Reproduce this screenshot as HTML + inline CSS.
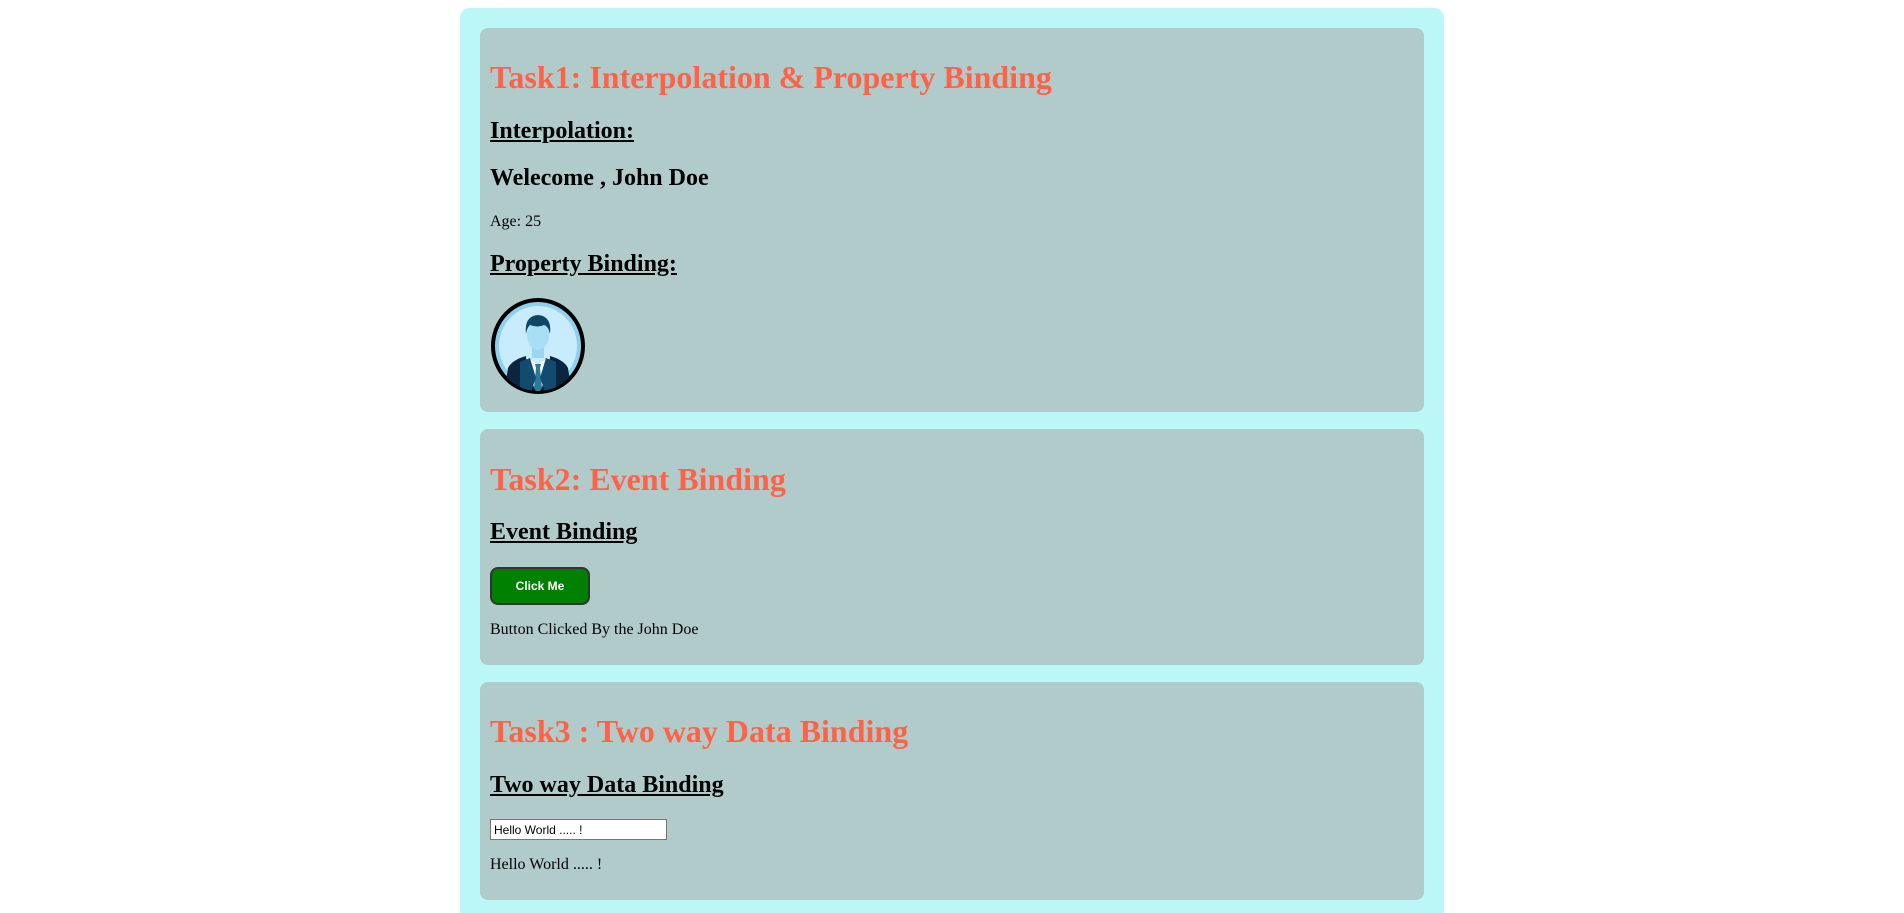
<!DOCTYPE html>
<html><head><meta charset="utf-8"><style>
html,body{margin:0;padding:0;background:#fff;overflow:hidden;}
body{width:1904px;height:913px;position:relative;font-family:"Liberation Serif",serif;}
.outer{position:absolute;left:460px;top:8px;width:944px;height:865px;background:#bbf7f7;border-radius:10px 10px 0 0;padding:20px;}
.card{background:#b1cbcb;border-radius:8px;padding:10px;margin-bottom:17px;}
.card h1{color:#ff6347;font-size:32px;margin:21.44px 0;line-height:37px;}
.card h2{font-size:24px;margin:19.92px 0;line-height:27.6px;}
.u{text-decoration:underline;}
.card p{font-size:16px;margin:16px 0;line-height:18px;}
.card p.age{margin:19.92px 0;}
.btn{display:block;width:100px;height:38px;background:#008000;border:2px solid #333;border-radius:8px;color:#fff;font:bold 12px "Liberation Sans",sans-serif;box-sizing:border-box;}
input{display:block;width:177px;height:21px;box-sizing:border-box;border:1px solid #767676;font:12px "Liberation Sans",sans-serif;padding:1px 3px;margin:0;background:#fff;}
</style></head><body>
<div class="outer">
<div class="card">
<h1>Task1: Interpolation &amp; Property Binding</h1>
<h2 class="u">Interpolation:</h2>
<h2>Welecome , John Doe</h2>
<p class="age">Age: 25</p>
<h2 class="u">Property Binding:</h2>
<svg width="96" height="96" viewBox="0 0 96 96" style="display:block;margin-top:19.92px;margin-bottom:8px">
<defs><clipPath id="c"><ellipse cx="48" cy="48" rx="44" ry="45"/></clipPath></defs>
<ellipse cx="48" cy="48" rx="45" ry="46" fill="#90d0ee" stroke="#000" stroke-width="4"/>
<ellipse cx="48" cy="48" rx="39" ry="40" fill="#c8ecfc"/>
<g clip-path="url(#c)">
<path d="M14 96 L18 70 Q22 62 36 58 L48 66 L60 58 Q74 62 78 70 L82 96Z" fill="#0b2440"/>
<path d="M36 58 L48 66 L60 58 L58 78 L48 96 L38 78Z" fill="#fff"/>
<path d="M45 66 L51 66 L50 70 L52 90 L48 96 L44 90 L46 70Z" fill="#2a7a9a"/>
<path d="M30 64 L40 60 L46 80 L40 96 L30 96Z" fill="#134a70"/>
<path d="M66 64 L56 60 L50 80 L56 96 L66 96Z" fill="#134a70"/>
</g>
<rect x="42" y="48" width="12" height="12" fill="#9bd6f0"/>
<ellipse cx="48" cy="38" rx="11" ry="14" fill="#a8def6"/>
<path d="M36 36 Q34 18 48 17 Q62 18 60 36 Q58 28 54 27 Q48 30 40 27 Q37 30 36 36Z" fill="#0f4668"/>
</svg>
</div>
<div class="card">
<h1>Task2: Event Binding</h1>
<h2 class="u">Event Binding</h2>
<button class="btn">Click Me</button>
<p>Button Clicked By the John Doe</p>
</div>
<div class="card">
<h1>Task3 : Two way Data Binding</h1>
<h2 class="u">Two way Data Binding</h2>
<input value="Hello World ..... !">
<p>Hello World ..... !</p>
</div>
</div>
</body></html>
